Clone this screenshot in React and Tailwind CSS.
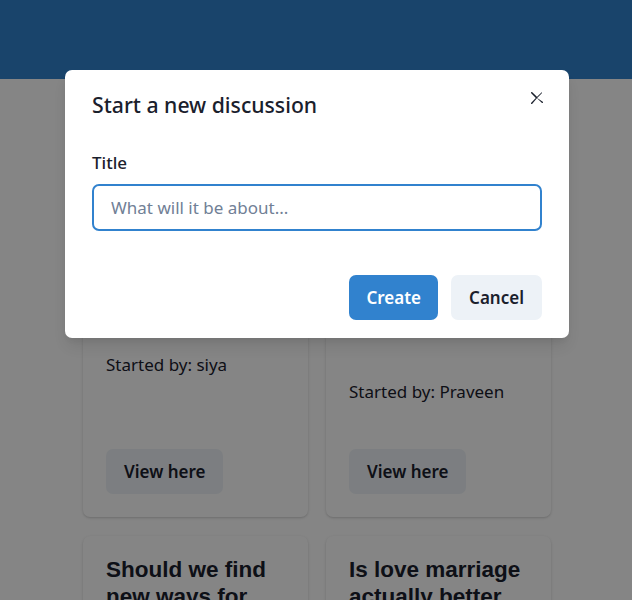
import { useState } from 'react'

const font = { fontFamily: '"Noto Sans", "Open Sans", sans-serif' }

const discussions = [
  { title: 'Are arranged marriages still relevant today?', author: 'siya', pad: 'h-[224px]' },
  { title: 'How do we deal with pressure from relatives?', author: 'Praveen', pad: 'h-[251px]' },
  { title: 'Should we find new ways for', author: '', pad: '' },
  { title: 'Is love marriage actually better', author: '', pad: '' },
]

function CloseIcon() {
  return (
    <svg viewBox="0 0 24 24" className="w-[12px] h-[12px]" fill="currentColor">
      <path d="M.439,21.44a1.5,1.5,0,0,0,2.122,2.121L11.823,12.3a.25.25,0,0,1,.354,0l9.262,9.263a1.5,1.5,0,1,0,2.122-2.121L12.3,12.177a.25.25,0,0,1,0-.354l9.263-9.262A1.5,1.5,0,0,0,21.439.44L12.177,9.7a.25.25,0,0,1-.354,0L2.561.44A1.5,1.5,0,0,0,.439,2.561L9.7,11.823a.25.25,0,0,1,0,.354Z" />
    </svg>
  )
}

function DiscussionCard({ item }) {
  return (
    <div className="flex flex-col h-[413px] bg-white rounded-[7px] p-[23px] shadow-[0_1px_3px_rgba(0,0,0,0.12),0_1px_2px_rgba(0,0,0,0.08)]">
      <div className={item.pad}>
        <h2
          className="-mt-[3px] text-[22.5px] leading-[27px] font-bold text-[#1a202c]"
          style={{ fontFamily: '"Liberation Sans", Arial, sans-serif' }}
        >
          {item.title}
        </h2>
      </div>
      {item.author && (
        <>
          <p className="text-[17px] leading-[27px] text-[#1a202c]">Started by: {item.author}</p>
          <button className="mt-auto self-start h-[45px] px-[18px] rounded-[7px] bg-[#edf2f7] text-[17px] font-semibold text-[#1a202c]">
            View here
          </button>
        </>
      )}
    </div>
  )
}

export default function App() {
  const [title, setTitle] = useState('')

  return (
    <div className="relative h-[600px] overflow-hidden bg-white" style={font}>
      <header className="h-[79px] bg-[#3182ce]" />
      <main className="w-[468px] ml-[83px] pt-[25px] grid grid-cols-2 gap-x-[18px] gap-y-[19px]">
        {discussions.map((d, i) => (
          <DiscussionCard key={i} item={d} />
        ))}
      </main>

      {/* modal overlay */}
      <div className="absolute inset-0 bg-black/[0.48]" />
      <div className="absolute left-[65px] top-[70px] w-[504px] bg-white rounded-[7px] shadow-[0_10px_15px_-3px_rgba(0,0,0,0.1),0_4px_6px_-2px_rgba(0,0,0,0.05)] text-[#1a202c]">
        <div className="px-[27px] pt-[18px] pb-[18px]">
          <h1 className="text-[21.2px] leading-[34px] font-medium">Start a new discussion</h1>
        </div>
        <button className="absolute top-[10px] right-[14px] w-[36px] h-[36px] flex items-center justify-center rounded-[7px]">
          <CloseIcon />
        </button>
        <div className="px-[27px] pt-[9px] pb-[27px]">
          <label className="block text-[17px] leading-[27px] font-medium mb-[8px]">Title</label>
          <input
            autoFocus
            value={title}
            onChange={(e) => setTitle(e.target.value)}
            placeholder="What will it be about..."
            className="w-full h-[47px] px-[17px] text-[17px] rounded-[7px] border-2 border-[#3182ce] outline-none placeholder:text-[#718096]"
          />
        </div>
        <div className="flex justify-end gap-[13px] px-[27px] pt-[17px] pb-[18px]">
          <button className="h-[45px] px-[17px] rounded-[7px] bg-[#3182ce] text-white text-[17px] font-semibold">
            Create
          </button>
          <button className="h-[45px] px-[18px] rounded-[7px] bg-[#edf2f7] text-[#1a202c] text-[17px] font-semibold">
            Cancel
          </button>
        </div>
      </div>
    </div>
  )
}
